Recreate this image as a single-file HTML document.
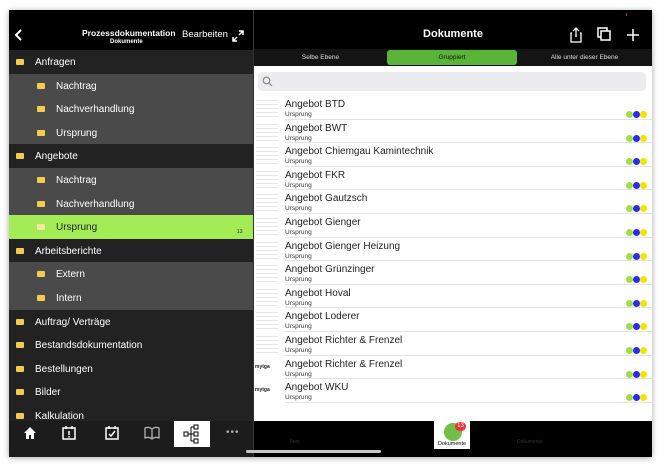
<!DOCTYPE html>
<html><head><meta charset="utf-8"><style>
*{margin:0;padding:0;box-sizing:border-box}
body{width:664px;height:470px;background:#fff;font-family:"Liberation Sans",sans-serif;position:relative;overflow:hidden}
.dev{position:absolute;left:9px;top:10px;width:643px;height:447px;background:#000;box-shadow:0 1px 6px rgba(0,0,0,.35);overflow:hidden}
.a{position:absolute}
.row{position:absolute;left:0;width:244px;height:24px;color:#fff;font-size:10px;line-height:25px}
.top{background:#222}
.sub{background:#4a4a4a}
.fold{position:absolute;top:9px;width:8px;height:6px;background:#f3cc4c;border-radius:1px}
.row span{position:absolute}
.doc{position:absolute;left:245px;width:398px;height:23.6px;background:#fff}
.doc .t{position:absolute;left:31px;top:3px;font-size:10px;color:#222;white-space:nowrap}
.doc .s{position:absolute;left:31px;top:15px;font-size:6.5px;color:#333}
.doc .ln{position:absolute;left:31px;right:0;bottom:0;height:1px;background:#e2e2e2}
.doc .th{position:absolute;left:2px;top:1px;width:22px;height:21px;background:repeating-linear-gradient(#fff 0 3px,#e0e0e0 3px 4px);opacity:.8}
.doc .my{position:absolute;left:1px;top:8px;font-size:5px;color:#222;font-weight:bold}
.dots{position:absolute;right:4px;top:15px;width:22px;height:7px}
.dots i{position:absolute;top:0;width:7px;height:7px;border-radius:50%}
.g{left:0;background:#9fe040}.b{left:7px;background:#2b2bf0}.y{left:14px;background:#f2e400}
</style></head><body>
<div class="dev">
<div class="a" style="left:0;top:0;width:244px;height:40px;background:#000"></div>
<svg class="a" style="left:5px;top:18px" width="10" height="14"><path d="M7 2 L2 7 L7 12" stroke="#fff" stroke-width="2" fill="none"/></svg>
<div class="a" style="left:73px;top:18px;color:#fff;font-size:8.5px;font-weight:bold">Prozessdokumentation</div>
<div class="a" style="left:101px;top:29px;color:#fff;font-size:6px;font-weight:bold">Dokumente</div>
<div class="a" style="left:173px;top:19px;color:#fff;font-size:9.5px">Bearbeiten</div>
<svg class="a" style="left:222px;top:19px" width="14" height="14"><path d="M8 2h4v4M12 2L8 6M2 8v4h4M2 12l4-4" stroke="#fff" stroke-width="1.5" fill="none"/></svg>
<div class="row top" style="top:40px"><i class="fold" style="left:7px"></i><span style="left:26px">Anfragen</span></div>
<div class="row sub" style="top:63.6px"><i class="fold" style="left:28px"></i><span style="left:47px">Nachtrag</span></div>
<div class="row sub" style="top:87.2px"><i class="fold" style="left:28px"></i><span style="left:47px">Nachverhandlung</span></div>
<div class="row sub" style="top:110.8px"><i class="fold" style="left:28px"></i><span style="left:47px">Ursprung</span></div>
<div class="row top" style="top:134.4px"><i class="fold" style="left:7px"></i><span style="left:26px">Angebote</span></div>
<div class="row sub" style="top:158px"><i class="fold" style="left:28px"></i><span style="left:47px">Nachtrag</span></div>
<div class="row sub" style="top:181.6px"><i class="fold" style="left:28px"></i><span style="left:47px">Nachverhandlung</span></div>
<div class="row" style="top:205.2px;background:#a3ec55;color:#222"><i class="fold" style="left:28px;background:#f4e8a0"></i><span style="left:47px">Ursprung</span><span style="left:228px;top:14px;font-size:5px;line-height:6px">13</span></div>
<div class="row top" style="top:228.8px"><i class="fold" style="left:7px"></i><span style="left:26px">Arbeitsberichte</span></div>
<div class="row sub" style="top:252.4px"><i class="fold" style="left:28px"></i><span style="left:47px">Extern</span></div>
<div class="row sub" style="top:276px"><i class="fold" style="left:28px"></i><span style="left:47px">Intern</span></div>
<div class="row top" style="top:299.6px"><i class="fold" style="left:7px"></i><span style="left:26px">Auftrag/ Verträge</span></div>
<div class="row top" style="top:323.2px"><i class="fold" style="left:7px"></i><span style="left:26px">Bestandsdokumentation</span></div>
<div class="row top" style="top:346.8px"><i class="fold" style="left:7px"></i><span style="left:26px">Bestellungen</span></div>
<div class="row top" style="top:370.4px"><i class="fold" style="left:7px"></i><span style="left:26px">Bilder</span></div>
<div class="row top" style="top:394px"><i class="fold" style="left:7px"></i><span style="left:26px">Kalkulation</span></div>
<div class="a" style="left:0;top:411px;width:244px;height:36px;background:#1c1c1c"></div>
<svg class="a" style="left:13px;top:415px" width="16" height="16"><path d="M8 2L2 8h2v6h8V8h2z" fill="#fff"/><rect x="7" y="10" width="2" height="4" fill="#1c1c1c"/></svg>
<svg class="a" style="left:52px;top:415px" width="16" height="16"><rect x="2" y="3" width="12" height="11" stroke="#fff" stroke-width="1.5" fill="none"/><path d="M5 1v3M11 1v3M8 6v4M8 11v1.5" stroke="#fff" stroke-width="1.5"/></svg>
<svg class="a" style="left:95px;top:415px" width="16" height="16"><rect x="2" y="3" width="12" height="11" stroke="#fff" stroke-width="1.5" fill="none"/><path d="M5 1v3M11 1v3M5 9l2 2 4-5" stroke="#fff" stroke-width="1.5" fill="none"/></svg>
<svg class="a" style="left:135px;top:416px" width="16" height="14"><path d="M8 3C6 1 3 1 1 2v10c2-1 5-1 7 1 2-2 5-2 7-1V2C13 1 10 1 8 3zM8 3v10" stroke="#bbb" stroke-width="1.2" fill="none"/></svg>
<div class="a" style="left:165px;top:411px;width:36px;height:26px;background:#fff"></div>
<svg class="a" style="left:174px;top:413px" width="18" height="22"><rect x="1" y="9" width="4" height="4" fill="none" stroke="#000"/><rect x="11" y="2" width="4" height="4" fill="none" stroke="#000"/><rect x="11" y="9" width="4" height="4" fill="none" stroke="#000"/><rect x="11" y="16" width="4" height="4" fill="none" stroke="#000"/><path d="M5 11h3M8 4v14M8 4h3M8 11h3M8 18h3" stroke="#000"/></svg>
<div class="a" style="left:217px;top:417px;color:#aaa;font-size:10px;letter-spacing:1px">•••</div>
<div class="a" style="left:244px;top:0;width:1px;height:447px;background:#333"></div>
<div class="a" style="left:245px;top:18px;width:398px;text-align:center;color:#fff;font-size:11px;font-weight:bold">Dokumente</div>
<svg class="a" style="left:560px;top:17px" width="14" height="16"><path d="M3 6H2v9h10V6h-1M7 1v9M4 4l3-3 3 3" stroke="#fff" stroke-width="1.3" fill="none"/></svg>
<svg class="a" style="left:588px;top:17px" width="14" height="14"><rect x="1" y="1" width="9" height="9" fill="none" stroke="#fff" stroke-width="1.5"/><rect x="4" y="4" width="9" height="9" fill="#000" stroke="#fff" stroke-width="1.5"/></svg>
<svg class="a" style="left:618px;top:19px" width="12" height="12"><path d="M6 0v12M0 6h12" stroke="#fff" stroke-width="1.5"/></svg>
<div class="a" style="left:617px;top:3px;width:1px;height:3px;background:#a33"></div>
<div class="a" style="left:245px;top:39px;width:398px;height:17px;background:#141414"></div>
<div class="a" style="left:378px;top:40px;width:130px;height:15px;background:#5bb43a;border-radius:3px"></div>
<div class="a" style="left:245px;top:44px;width:133px;text-align:center;color:#ddd;font-size:6.5px">Selbe Ebene</div>
<div class="a" style="left:378px;top:44px;width:130px;text-align:center;color:#111;font-size:6.5px">Gruppiert</div>
<div class="a" style="left:508px;top:44px;width:135px;text-align:center;color:#ddd;font-size:6.5px">Alle unter dieser Ebene</div>
<div class="a" style="left:245px;top:56px;width:398px;height:355px;background:#fff"></div>
<div class="a" style="left:249px;top:62px;width:388px;height:19px;background:#ececee;border-radius:5px"></div>
<svg class="a" style="left:253px;top:66px" width="11" height="11"><circle cx="4.5" cy="4.5" r="3.3" stroke="#888" stroke-width="1.2" fill="none"/><path d="M7 7l3 3" stroke="#888" stroke-width="1.2"/></svg>

<div class="doc" style="top:86px"><div class="th"></div><div class="t">Angebot BTD</div><div class="s">Ursprung</div><div class="dots"><i class="g"></i><i class="b"></i><i class="y"></i></div><div class="ln"></div></div>
<div class="doc" style="top:109.6px"><div class="th"></div><div class="t">Angebot BWT</div><div class="s">Ursprung</div><div class="dots"><i class="g"></i><i class="b"></i><i class="y"></i></div><div class="ln"></div></div>
<div class="doc" style="top:133.2px"><div class="th"></div><div class="t">Angebot Chiemgau Kamintechnik</div><div class="s">Ursprung</div><div class="dots"><i class="g"></i><i class="b"></i><i class="y"></i></div><div class="ln"></div></div>
<div class="doc" style="top:156.8px"><div class="th"></div><div class="t">Angebot FKR</div><div class="s">Ursprung</div><div class="dots"><i class="g"></i><i class="b"></i><i class="y"></i></div><div class="ln"></div></div>
<div class="doc" style="top:180.4px"><div class="th"></div><div class="t">Angebot Gautzsch</div><div class="s">Ursprung</div><div class="dots"><i class="g"></i><i class="b"></i><i class="y"></i></div><div class="ln"></div></div>
<div class="doc" style="top:204px"><div class="th"></div><div class="t">Angebot Gienger</div><div class="s">Ursprung</div><div class="dots"><i class="g"></i><i class="b"></i><i class="y"></i></div><div class="ln"></div></div>
<div class="doc" style="top:227.6px"><div class="th"></div><div class="t">Angebot Gienger Heizung</div><div class="s">Ursprung</div><div class="dots"><i class="g"></i><i class="b"></i><i class="y"></i></div><div class="ln"></div></div>
<div class="doc" style="top:251.2px"><div class="th"></div><div class="t">Angebot Grünzinger</div><div class="s">Ursprung</div><div class="dots"><i class="g"></i><i class="b"></i><i class="y"></i></div><div class="ln"></div></div>
<div class="doc" style="top:274.8px"><div class="th"></div><div class="t">Angebot Hoval</div><div class="s">Ursprung</div><div class="dots"><i class="g"></i><i class="b"></i><i class="y"></i></div><div class="ln"></div></div>
<div class="doc" style="top:298.4px"><div class="th"></div><div class="t">Angebot Loderer</div><div class="s">Ursprung</div><div class="dots"><i class="g"></i><i class="b"></i><i class="y"></i></div><div class="ln"></div></div>
<div class="doc" style="top:322px"><div class="th"></div><div class="t">Angebot Richter &amp; Frenzel</div><div class="s">Ursprung</div><div class="dots"><i class="g"></i><i class="b"></i><i class="y"></i></div><div class="ln"></div></div>
<div class="doc" style="top:345.6px"><div class="my">mytga</div><div class="t">Angebot Richter &amp; Frenzel</div><div class="s">Ursprung</div><div class="dots"><i class="g"></i><i class="b"></i><i class="y"></i></div><div class="ln"></div></div>
<div class="doc" style="top:369.2px"><div class="my">mytga</div><div class="t">Angebot WKU</div><div class="s">Ursprung</div><div class="dots"><i class="g"></i><i class="b"></i><i class="y"></i></div><div class="ln"></div></div>

<div class="a" style="left:245px;top:411px;width:398px;height:36px;background:#000"></div>
<div class="a" style="left:281px;top:429px;color:#333;font-size:5px">Item</div>
<div class="a" style="left:508px;top:429px;color:#333;font-size:5px">Dokumente</div>
<div class="a" style="left:425px;top:411px;width:36px;height:28px;background:#fff"></div>
<div class="a" style="left:435px;top:413px;width:18px;height:18px;border-radius:50%;background:#6fbf4a"></div>
<div class="a" style="left:446px;top:412px;width:11px;height:9px;border-radius:5px;background:#e33;color:#fff;font-size:6px;text-align:center;line-height:9px">13</div>
<div class="a" style="left:425px;top:431px;width:36px;text-align:center;color:#000;font-size:5.5px">Dokumente</div>
<div class="a" style="left:237px;top:440px;width:135px;height:3px;border-radius:2px;background:#c8c8c8"></div>
</div>
</body></html>
